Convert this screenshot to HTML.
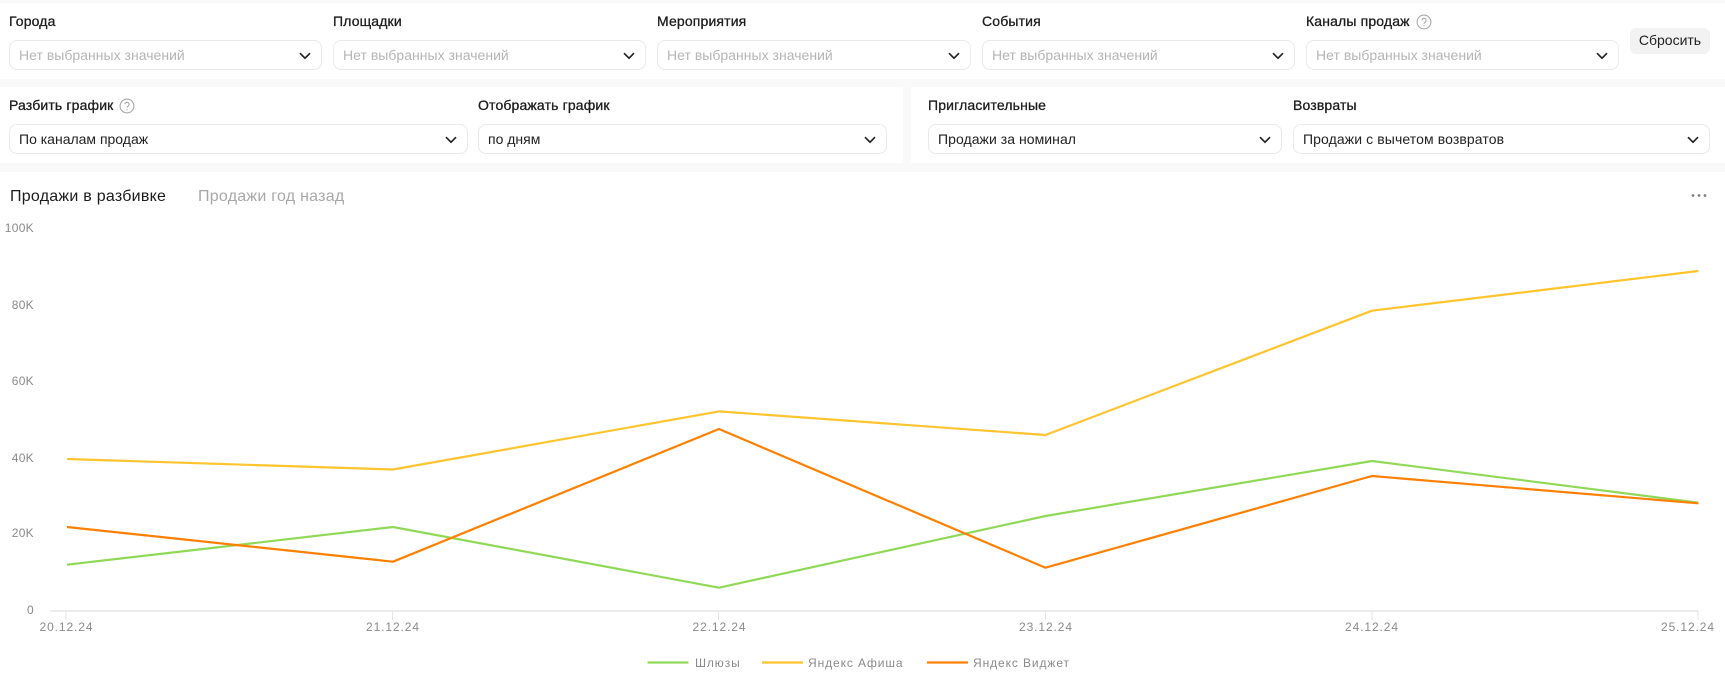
<!DOCTYPE html>
<html lang="ru"><head><meta charset="utf-8"><title>Продажи</title>
<style>
html,body{margin:0;padding:0;background:#fff}
#p{position:relative;width:1725px;height:683px;overflow:hidden;background:#fff;font-family:"Liberation Sans","Noto Sans CJK SC",sans-serif;color:#1c1c1c}
.band{position:absolute;background:#f9f9f9}
.l{position:absolute;font-size:14px;line-height:20px;white-space:nowrap;letter-spacing:.15px;-webkit-text-stroke:.3px #1c1c1c}
.s{position:absolute;box-sizing:border-box;height:30px;border:1px solid #e9e9e9;border-radius:8px;background:#fff;font-size:14px;line-height:28px;padding-left:9px;white-space:nowrap;color:#222;letter-spacing:.1px}
.s.e{color:#b5b5b5;letter-spacing:.02px}
.s svg{position:absolute;right:10px;top:11px}
.q{position:absolute}
.t{position:absolute;font-size:16px;line-height:20px;white-space:nowrap;letter-spacing:.25px}
#b{position:absolute;left:1630px;top:28px;width:80px;height:26px;background:#f2f2f2;border-radius:6px;font-size:14px;line-height:25px;text-align:center;color:#222}
svg text{font-family:"Liberation Sans",sans-serif;font-size:12px;fill:#8a8a8a;letter-spacing:.9px}
svg g.y text{letter-spacing:.3px}
</style></head><body><div id="p">
<div class="band" style="left:0;top:0;width:1725px;height:3px"></div>
<div class="band" style="left:0;top:79px;width:1725px;height:8px"></div>
<div class="band" style="left:0;top:163px;width:1725px;height:9px"></div>
<div class="band" style="left:903px;top:87px;width:8px;height:76px"></div>

<div class="l" style="left:9px;top:11px">Города</div>
<div class="l" style="left:333px;top:11px">Площадки</div>
<div class="l" style="left:657px;top:11px">Мероприятия</div>
<div class="l" style="left:982px;top:11px">События</div>
<div class="l" style="left:1306px;top:11px">Каналы продаж</div>
<svg class="q" style="left:1416px;top:14px" width="16" height="16" viewBox="0 0 16 16" fill="none" stroke="#a8a8a8" stroke-width="1.1"><circle cx="8" cy="8" r="6.9"/><path d="M5.900 6.300a2.100 2.100 0 1 1 3.200 1.800c-.7.400-1.100.800-1.100 1.600"/><path d="M8 11.200v1" stroke-width="1.200"/></svg>

<div class="s e" style="left:9px;top:40px;width:313px">Нет выбранных значений<svg width="12" height="8" viewBox="0 0 12 8" fill="none" stroke="#222" stroke-width="1.7"><path d="M1 1.200l5 5 5-5"/></svg></div>
<div class="s e" style="left:333px;top:40px;width:313px">Нет выбранных значений<svg width="12" height="8" viewBox="0 0 12 8" fill="none" stroke="#222" stroke-width="1.7"><path d="M1 1.200l5 5 5-5"/></svg></div>
<div class="s e" style="left:657px;top:40px;width:314px">Нет выбранных значений<svg width="12" height="8" viewBox="0 0 12 8" fill="none" stroke="#222" stroke-width="1.7"><path d="M1 1.200l5 5 5-5"/></svg></div>
<div class="s e" style="left:982px;top:40px;width:313px">Нет выбранных значений<svg width="12" height="8" viewBox="0 0 12 8" fill="none" stroke="#222" stroke-width="1.7"><path d="M1 1.200l5 5 5-5"/></svg></div>
<div class="s e" style="left:1306px;top:40px;width:313px">Нет выбранных значений<svg width="12" height="8" viewBox="0 0 12 8" fill="none" stroke="#222" stroke-width="1.7"><path d="M1 1.200l5 5 5-5"/></svg></div>
<div id="b">Сбросить</div>

<div class="l" style="left:9px;top:95px">Разбить график</div>
<svg class="q" style="left:119px;top:98px" width="16" height="16" viewBox="0 0 16 16" fill="none" stroke="#a8a8a8" stroke-width="1.1"><circle cx="8" cy="8" r="6.9"/><path d="M5.900 6.300a2.100 2.100 0 1 1 3.200 1.800c-.7.400-1.100.800-1.100 1.600"/><path d="M8 11.200v1" stroke-width="1.200"/></svg>
<div class="l" style="left:478px;top:95px">Отображать график</div>
<div class="l" style="left:928px;top:95px">Пригласительные</div>
<div class="l" style="left:1293px;top:95px">Возвраты</div>

<div class="s" style="left:9px;top:124px;width:459px;letter-spacing:0">По каналам продаж<svg width="12" height="8" viewBox="0 0 12 8" fill="none" stroke="#222" stroke-width="1.7"><path d="M1 1.200l5 5 5-5"/></svg></div>
<div class="s" style="left:478px;top:124px;width:409px;letter-spacing:0">по дням<svg width="12" height="8" viewBox="0 0 12 8" fill="none" stroke="#222" stroke-width="1.7"><path d="M1 1.200l5 5 5-5"/></svg></div>
<div class="s" style="left:928px;top:124px;width:354px;letter-spacing:.05px">Продажи за номинал<svg width="12" height="8" viewBox="0 0 12 8" fill="none" stroke="#222" stroke-width="1.7"><path d="M1 1.200l5 5 5-5"/></svg></div>
<div class="s" style="left:1293px;top:124px;width:417px">Продажи с вычетом возвратов<svg width="12" height="8" viewBox="0 0 12 8" fill="none" stroke="#222" stroke-width="1.7"><path d="M1 1.200l5 5 5-5"/></svg></div>

<div class="t" style="left:10px;top:187px">Продажи в разбивке</div>
<div class="t" style="left:198px;top:187px;color:#a8a8a8">Продажи год назад</div>

<svg style="position:absolute;left:0;top:0" width="1725" height="683" viewBox="0 0 1725 683">
<g fill="#808080"><circle cx="1693" cy="195.500" r="1.400"/><circle cx="1699" cy="195.500" r="1.400"/><circle cx="1705" cy="195.500" r="1.400"/></g>
<g class="y" text-anchor="end">
<text x="34" y="232">100K</text><text x="34" y="309">80K</text><text x="34" y="385">60K</text><text x="34" y="462">40K</text><text x="34" y="537">20K</text><text x="34" y="614">0</text>
</g>
<path d="M50 611H1698" stroke="#e6e6e6" stroke-width="1.500" fill="none"/>
<path d="M66 611v9M392.500 611v9M718.500 611v9M1045.500 611v9M1372 611v9M1698 611v9" stroke="#e6e6e6" fill="none"/>
<g text-anchor="middle">
<text x="66.500" y="631">20.12.24</text><text x="393" y="631">21.12.24</text><text x="719.500" y="631">22.12.24</text><text x="1046" y="631">23.12.24</text><text x="1372" y="631">24.12.24</text><text x="1688" y="631">25.12.24</text>
</g>
<g fill="none" stroke-width="2.200" stroke-linejoin="bevel">
<polyline stroke="#8fd957" points="67,564.700 393,527 719,587.700 1045.500,516 1372,461 1698.300,502.700"/>
<polyline stroke="#ffc42e" points="67,459 393,469.500 719,411.400 1045.500,435 1372,310.700 1698.300,271"/>
<polyline stroke="#ff8000" points="67,527 393,561.700 719,429 1045.500,567.700 1372,476 1698.300,503.300"/>
<path stroke="#8fd957" d="M647.500 662.500H688.500"/>
<path stroke="#ffc42e" d="M762 662.500H803"/>
<path stroke="#ff8000" d="M927 662.500H968"/>
</g>
<text x="695" y="667">Шлюзы</text><text x="808" y="667">Яндекс Афиша</text><text x="973" y="667">Яндекс Виджет</text>
</svg>
</div></body></html>
